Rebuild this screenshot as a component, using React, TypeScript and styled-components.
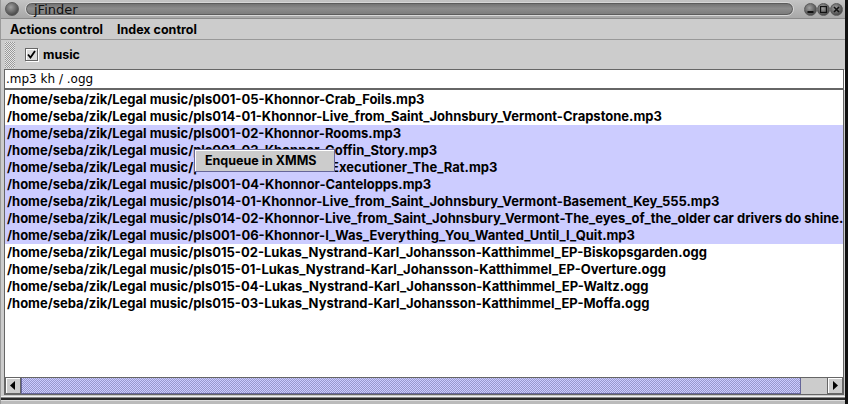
import styled, { createGlobalStyle } from "styled-components";

const GlobalStyle = createGlobalStyle`
  html, body {
    margin: 0;
    padding: 0;
    background: #cccccc;
  }
`;

const colors = {
  control: "#cccccc",
  shadow: "#999999",
  darkShadow: "#666666",
  select: "#ccccff",
  selectDark: "#9999cc",
  text: "#000000",
};

const listFont = `Inter, "DejaVu Sans", sans-serif`;
const fieldFont = `"DejaVu Sans", "Liberation Sans", sans-serif`;

const Window = styled.div`
  width: 848px;
  height: 404px;
  display: flex;
  flex-direction: column;
  background: ${colors.control};
  overflow: hidden;
  box-sizing: border-box;
  border-right: 3px solid #111111;
  border-left: 1px solid #9a9a9a;
  font-family: ${listFont};
`;

const TitleBar = styled.div`
  height: 19px;
  flex-shrink: 0;
  display: flex;
  align-items: center;
  gap: 6px;
  padding: 0 2px 0 4px;
  background: linear-gradient(#c4c4c4, #a8a8a8);
  border-bottom: 1px solid #8a8a8a;
  box-sizing: border-box;
`;

const Knob = styled.div<{ $size?: number }>`
  width: ${(p) => p.$size ?? 13}px;
  height: ${(p) => p.$size ?? 13}px;
  border-radius: 50%;
  flex-shrink: 0;
  background: radial-gradient(circle at 40% 35%, #a0a0a0, #4a4a4a 75%);
  border: 1px solid #5a5a5a;
  box-sizing: border-box;
  display: flex;
  align-items: center;
  justify-content: center;
`;

const TitlePill = styled.div`
  flex: 1;
  height: 14px;
  border-radius: 7px;
  background: linear-gradient(#6e6e6e, #8c8c8c 45%, #7a7a7a);
  border: 1px solid #d8d8d8;
  box-shadow: inset 0 0 0 1px #5c5c5c;
  display: flex;
  align-items: center;
  padding-left: 8px;
  font-family: ${fieldFont};
  font-size: 13px;
  color: #111111;
  box-sizing: border-box;
  margin-right: 4px;
`;

const TitleButtons = styled.div`
  display: flex;
`;

const MenuBar = styled.div`
  height: 20px;
  flex-shrink: 0;
  display: flex;
  align-items: center;
  gap: 14px;
  padding-left: 9px;
  border-bottom: 1px solid ${colors.shadow};
  font-size: 12.5px;
  font-weight: bold;
`;

const ToolBar = styled.div`
  height: 29px;
  flex-shrink: 0;
  display: flex;
  align-items: center;
  padding-left: 4px;
  gap: 10px;
`;

const Grip = styled.div`
  width: 10px;
  height: 26px;
  background: repeating-conic-gradient(#999999 0 25%, #e6e6e6 0 50%) 0 0 / 2px 2px;
`;

const CheckLabel = styled.label`
  display: flex;
  align-items: center;
  gap: 5px;
  font-size: 12.5px;
  font-weight: bold;
`;

const CheckBox = styled.span`
  width: 13px;
  height: 13px;
  box-sizing: border-box;
  border: 1px solid #666666;
  box-shadow: inset 1px 1px 0 #ffffff, 1px 1px 0 #ffffff;
  background: #dddddd;
  display: flex;
  align-items: center;
  justify-content: center;
`;

const SearchField = styled.div`
  height: 20px;
  flex-shrink: 0;
  margin: 0 1px 0 3px;
  box-sizing: border-box;
  border: 1px solid ${colors.darkShadow};
  box-shadow: 1px 1px 0 #ffffff;
  background: #ffffff;
  display: flex;
  align-items: center;
  padding-left: 1px;
  font-family: ${fieldFont};
  font-size: 12px;
`;

const ListPane = styled.div`
  position: relative;
  flex: 1;
  margin: 0 1px 0 3px;
  display: flex;
  flex-direction: column;
  border: 1px solid ${colors.darkShadow};
  background: #ffffff;
  min-height: 0;
`;

const Rows = styled.div`
  flex: 1;
  overflow: hidden;
  padding-top: 1px;
`;

const Row = styled.div<{ $selected?: boolean }>`
  height: 17px;
  line-height: 17px;
  padding-left: 2px;
  white-space: nowrap;
  font-size: 13px;
  font-weight: bold;
  color: ${colors.text};
  background: ${(p) => (p.$selected ? colors.select : "transparent")};
`;

const ScrollBar = styled.div`
  height: 16px;
  flex-shrink: 0;
  display: flex;
  border-top: 1px solid ${colors.darkShadow};
  background: ${colors.control};
`;

const ArrowButton = styled.div`
  width: 16px;
  flex-shrink: 0;
  box-sizing: border-box;
  display: flex;
  align-items: center;
  justify-content: center;
  background: ${colors.control};
  border: 1px solid ${colors.darkShadow};
  border-top: none;
  box-shadow: inset 1px 1px 0 #ffffff;
`;

const Thumb = styled.div`
  flex: 1;
  box-sizing: border-box;
  border: 1px solid #666699;
  border-top: none;
  background: repeating-conic-gradient(#9999cc 0 25%, #ccccff 0 50%) 0 0 / 2px 2px;
`;

const Track = styled.div`
  width: 26px;
  flex-shrink: 0;
  background: ${colors.control};
`;

const BottomFrame = styled.div`
  height: 9px;
  flex-shrink: 0;
  background: linear-gradient(
    #cccccc 0 1px,
    #f2f2f2 1px 2px,
    #888888 2px 3px,
    #2a2a2a 3px 5px,
    #dddddd 5px 6px,
    #bbbbbb 6px
  );
`;

const Popup = styled.div`
  position: absolute;
  left: 189px;
  top: 59px;
  width: 141px;
  height: 23px;
  box-sizing: border-box;
  border: 1px solid #666699;
  background: ${colors.control};
  box-shadow: inset 1px 1px 0 #ffffff;
  display: flex;
  align-items: center;
  padding-left: 10px;
  font-size: 12.5px;
  font-weight: bold;
`;

const base = "/home/seba/zik/Legal music/";

const files: { name: string; selected?: boolean }[] = [
  { name: "pls001-05-Khonnor-Crab_Foils.mp3" },
  { name: "pls014-01-Khonnor-Live_from_Saint_Johnsbury_Vermont-Crapstone.mp3" },
  { name: "pls001-02-Khonnor-Rooms.mp3", selected: true },
  { name: "pls001-03-Khonnor-Coffin_Story.mp3", selected: true },
  { name: "pls008-08-Khonnor- Executioner_The_Rat.mp3", selected: true },
  { name: "pls001-04-Khonnor-Cantelopps.mp3", selected: true },
  {
    name: "pls014-01-Khonnor-Live_from_Saint_Johnsbury_Vermont-Basement_Key_555.mp3",
    selected: true,
  },
  {
    name: "pls014-02-Khonnor-Live_from_Saint_Johnsbury_Vermont-The_eyes_of_the_older car drivers do shine.mp3",
    selected: true,
  },
  {
    name: "pls001-06-Khonnor-I_Was_Everything_You_Wanted_Until_I_Quit.mp3",
    selected: true,
  },
  { name: "pls015-02-Lukas_Nystrand-Karl_Johansson-Katthimmel_EP-Biskopsgarden.ogg" },
  { name: "pls015-01-Lukas_Nystrand-Karl_Johansson-Katthimmel_EP-Overture.ogg" },
  { name: "pls015-04-Lukas_Nystrand-Karl_Johansson-Katthimmel_EP-Waltz.ogg" },
  { name: "pls015-03-Lukas_Nystrand-Karl_Johansson-Katthimmel_EP-Moffa.ogg" },
];

function App() {
  return (
    <>
      <GlobalStyle />
      <Window>
        <TitleBar>
          <Knob $size={14} />
          <TitlePill>jFinder</TitlePill>
          <TitleButtons>
            <Knob>
              <svg width="7" height="7" viewBox="0 0 7 7">
                <rect x="0.5" y="5" width="6" height="2" fill="#111" />
              </svg>
            </Knob>
            <Knob>
              <svg width="7" height="7" viewBox="0 0 7 7">
                <rect x="0.5" y="0.5" width="6" height="6" fill="none" stroke="#111" strokeWidth="1.3" />
              </svg>
            </Knob>
            <Knob>
              <svg width="7" height="7" viewBox="0 0 7 7">
                <path d="M1 1 L6 6 M6 1 L1 6" stroke="#111" strokeWidth="1.6" />
              </svg>
            </Knob>
          </TitleButtons>
        </TitleBar>

        <MenuBar>
          <span>Actions control</span>
          <span>Index control</span>
        </MenuBar>

        <ToolBar>
          <Grip />
          <CheckLabel>
            <CheckBox>
              <svg width="9" height="9" viewBox="0 0 9 9">
                <path d="M1 4.5 L3.5 7.5 L8 1" fill="none" stroke="#000" strokeWidth="1.8" />
              </svg>
            </CheckBox>
            music
          </CheckLabel>
        </ToolBar>

        <SearchField>.mp3 kh / .ogg</SearchField>

        <ListPane>
          <Rows>
            {files.map((f) => (
              <Row key={f.name} $selected={f.selected}>
                {base + f.name}
              </Row>
            ))}
          </Rows>
          <ScrollBar>
            <ArrowButton>
              <svg width="6" height="9" viewBox="0 0 6 9">
                <path d="M5 0 L0 4.5 L5 9 Z" fill="#000" />
              </svg>
            </ArrowButton>
            <Thumb />
            <Track />
            <ArrowButton>
              <svg width="6" height="9" viewBox="0 0 6 9">
                <path d="M1 0 L6 4.5 L1 9 Z" fill="#000" />
              </svg>
            </ArrowButton>
          </ScrollBar>
          <Popup>Enqueue in XMMS</Popup>
        </ListPane>

        <BottomFrame />
      </Window>
    </>
  );
}

export default App;
